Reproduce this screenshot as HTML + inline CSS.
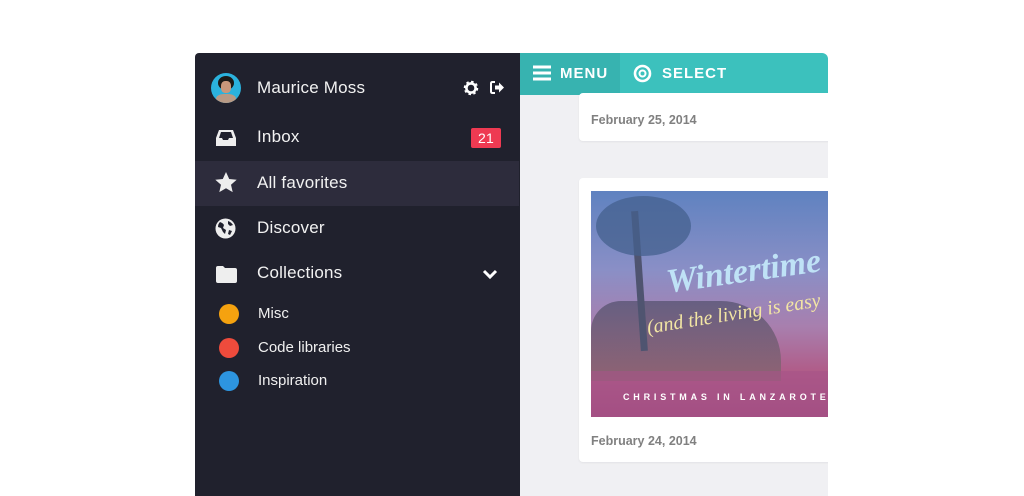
<!DOCTYPE html>
<html><head><style>
*{margin:0;padding:0;box-sizing:border-box}
body{width:1024px;height:496px;background:#fff;position:relative;overflow:hidden;font-family:"Liberation Sans",sans-serif}
.side{position:absolute;left:195px;top:53px;width:325px;height:443px;background:#20212d;border-radius:4px 0 0 0}
.row{position:absolute;left:0;width:324px;height:45px;color:#f2f2f2;font-size:17px;letter-spacing:.2px}
.row .t{position:absolute;left:62px;top:12px}
.sub{position:absolute;left:0;color:#f0f0f0;font-size:15px}
.dot{position:absolute;left:24px;width:20px;height:20px;border-radius:50%}
.main{position:absolute;left:520px;top:53px;width:308px;height:443px;background:#f0f0f3;border-radius:0 6px 0 0;overflow:hidden}
.hdr{position:absolute;left:0;top:0;width:308px;height:42px;background:#3cc1bd;border-bottom:2px solid #33aeaa}
.card{position:absolute;left:59px;width:260px;background:#fff;border-radius:4px;box-shadow:0 1px 2px rgba(0,0,0,.06)}
.date{position:absolute;left:12px;color:#808080;font-size:12.5px;font-weight:bold}
</style></head><body>
<div class="side">
 <div style="position:absolute;left:16px;top:20px;width:30px;height:30px;border-radius:50%;background:#2bb2dd;overflow:hidden">
  <div style="position:absolute;left:7px;top:3px;width:16px;height:14px;border-radius:50%;background:#1c1a18"></div>
  <div style="position:absolute;left:10px;top:8px;width:10px;height:12px;border-radius:40%;background:#c9977a"></div>
  <div style="position:absolute;left:5px;top:21px;width:20px;height:12px;border-radius:40%;background:#b89a85"></div>
 </div>
 <div style="position:absolute;left:62px;top:25px;color:#f2f2f2;font-size:17px;letter-spacing:.2px">Maurice Moss</div>
 <svg style="position:absolute;left:268px;top:27px" width="16" height="16" viewBox="0 0 16 16"><circle cx="8" cy="8" r="5.5" fill="none" stroke="#fff" stroke-width="3.5" stroke-dasharray="2.2 2.1"/><circle cx="8" cy="8" r="4.6" fill="none" stroke="#fff" stroke-width="2.6"/></svg>
 <svg style="position:absolute;left:294px;top:27px" width="16" height="15" viewBox="0 0 16 15"><path d="M6 2H3.5Q2 2 2 3.5v8Q2 13 3.5 13H6" fill="none" stroke="#fff" stroke-width="2"/><path d="M6 5.5h4V2.5l5 5-5 5v-3H6z" fill="#fff"/></svg>
 <div class="row" style="top:62px">
  <svg style="position:absolute;left:20px;top:14px" width="22" height="18" viewBox="0 0 22 18"><path d="M1 9L4 1h14l3 8v8H1z" fill="#eee"/><path d="M4 9l2-6h10l2 6h-4l-1 2H8l-1-2z" fill="#20212d"/></svg>
  <span class="t">Inbox</span>
  <div style="position:absolute;left:276px;top:13px;width:30px;height:20px;background:#ee3a52;border-radius:2px;color:#fff;font-size:14px;text-align:center;line-height:20px">21</div>
 </div>
 <div class="row" style="top:108px;background:#2d2c3c">
  <svg style="position:absolute;left:19px;top:10px" width="24" height="23" viewBox="0 0 24 23"><path d="M12 1l3.2 7 7.5.7-5.7 5 1.7 7.4L12 17.3 5.3 21.1 7 13.7 1.3 8.7 8.8 8z" fill="#eee"/></svg>
  <span class="t">All favorites</span>
 </div>
 <div class="row" style="top:153px">
  <svg style="position:absolute;left:20px;top:12px" width="21" height="21" viewBox="0 0 21 21"><circle cx="10.5" cy="10.5" r="10" fill="#eee"/><path d="M5 4q3 1 4 3l-1 3 3 2-1 4-2-2-2-4-3-1q0-3 2-5zM13 3q3 1 5 4l-3 1-2-2zM14 12l3 1-2 4-2-1z" fill="#20212d"/></svg>
  <span class="t">Discover</span>
 </div>
 <div class="row" style="top:198px">
  <svg style="position:absolute;left:20px;top:14px" width="23" height="19" viewBox="0 0 23 19"><path d="M1 3q0-2 2-2h5l2 2h10q2 0 2 2v11q0 2-2 2H3q-2 0-2-2z" fill="#eee"/></svg>
  <span class="t">Collections</span>
  <svg style="position:absolute;left:287px;top:18px" width="16" height="11" viewBox="0 0 16 11"><path d="M2 2l6 6 6-6" fill="none" stroke="#fff" stroke-width="3"/></svg>
 </div>
 <div class="dot" style="top:251px;background:#f5a20f"></div><div class="sub" style="left:63px;top:252px">Misc</div>
 <div class="dot" style="top:285px;background:#ee4b3c"></div><div class="sub" style="left:63px;top:286px">Code libraries</div>
 <div class="dot" style="top:318px;background:#2d95e0"></div><div class="sub" style="left:63px;top:319px">Inspiration</div>
</div>
<div class="main">
 <div class="hdr">
  <div style="position:absolute;left:0;top:0;width:100px;height:42px;background:#37b3b0"></div>
  <svg style="position:absolute;left:13px;top:12px" width="18" height="16" viewBox="0 0 18 16"><path d="M0 2h18M0 8h18M0 14h18" stroke="#fff" stroke-width="3"/></svg>
  <div style="position:absolute;left:40px;top:12px;color:#fff;font-weight:bold;font-size:15px;letter-spacing:1px">MENU</div>
  <svg style="position:absolute;left:113px;top:11px" width="19" height="19" viewBox="0 0 19 19"><circle cx="9.5" cy="9.5" r="7.5" fill="none" stroke="#fff" stroke-width="2.6"/><circle cx="9.5" cy="9.5" r="3" fill="none" stroke="#fff" stroke-width="2"/></svg>
  <div style="position:absolute;left:142px;top:12px;color:#fff;font-weight:bold;font-size:15px;letter-spacing:1px">SELECT</div>
 </div>
 <div class="card" style="top:40px;height:48px"><div class="date" style="top:20px">February 25, 2014</div></div>
 <div class="card" style="top:125px;height:284px">
  <div style="position:absolute;left:12px;top:13px;width:248px;height:226px;overflow:hidden;background:linear-gradient(180deg,#5f82c0 0%,#8a8fc6 35%,#a87fae 60%,#b05c88 80%,#a04a7c 100%)">
   <div style="position:absolute;left:0;top:110px;width:190px;height:80px;background:linear-gradient(180deg,#5d5878,#8a6470);opacity:.85;border-radius:30px 60px 0 0"></div>
   <div style="position:absolute;left:0;top:180px;width:248px;height:46px;background:#a65488;opacity:.6"></div>
   <div style="position:absolute;left:45px;top:20px;width:7px;height:140px;background:#4f5470;transform:rotate(-4deg)"></div>
   <div style="position:absolute;left:5px;top:5px;width:95px;height:60px;border-radius:50%;background:#44608e;opacity:.75"></div>
   <div style="position:absolute;left:75px;top:62px;color:#bfe2f6;font:italic bold 34px 'Liberation Serif',serif;transform:rotate(-8deg)">Wintertime</div>
   <div style="position:absolute;left:55px;top:112px;color:#f3e6a4;font:italic 20px 'Liberation Serif',serif;transform:rotate(-9deg);white-space:nowrap">(and the living is easy</div>
   <div style="position:absolute;left:32px;top:201px;color:#fff;font-size:9px;font-weight:bold;letter-spacing:3.8px;white-space:nowrap">CHRISTMAS IN LANZAROTE</div>
  </div>
  <div class="date" style="top:256px">February 24, 2014</div>
 </div>
</div>
</body></html>
